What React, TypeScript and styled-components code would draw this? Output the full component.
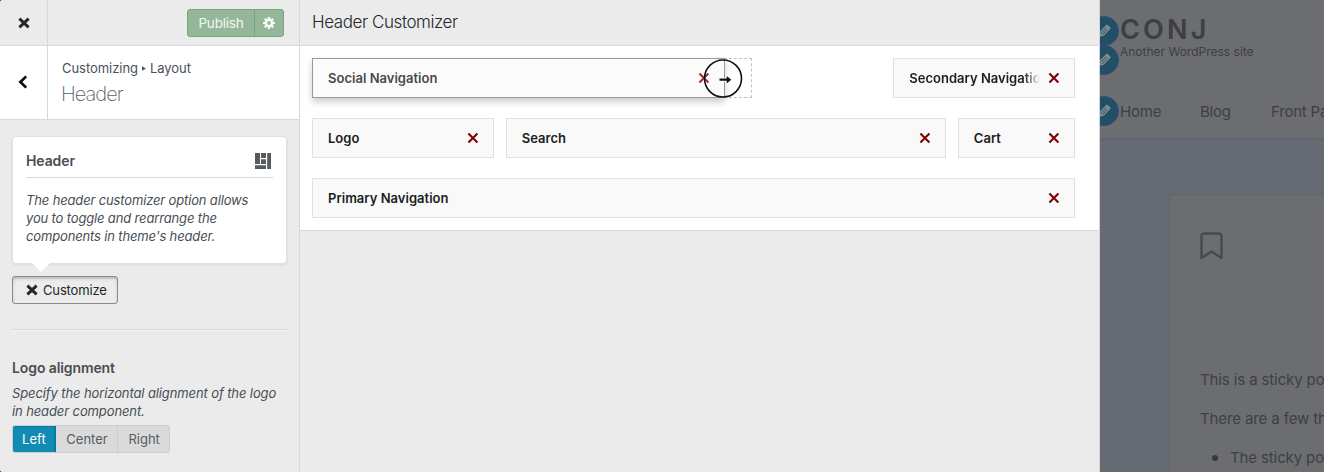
import React from "react";
import styled, { createGlobalStyle, css } from "styled-components";

const GlobalStyle = createGlobalStyle`
  *, *::before, *::after { box-sizing: border-box; }
  html, body { margin: 0; padding: 0; background: #3c3d40; overflow: hidden; }
  body { font-family: Inter, "Liberation Sans", sans-serif; font-size: 13px; color: #23282d; }
  button { font: inherit; margin: 0; padding: 0; cursor: pointer; }
  h1, h2, h3, p, ul { margin: 0; padding: 0; font-weight: inherit; }
  svg { display: block; flex: none; }
`;

const Shell = styled.div`
  display: grid;
  grid-template-columns: 300px 800px 224px;
  width: 1324px;
  height: 472px;
  overflow: hidden;
  border-radius: 3px;
  background: #ebebeb;
`;

/* Sidebar */

const Sidebar = styled.aside`
  display: flex;
  flex-direction: column;
  border-right: 1px solid #d9d9d9;
  background: #ebebeb;
`;

const TopBar = styled.header`
  display: flex;
  height: 46px;
  border-bottom: 1px solid #d9d9d9;
`;

const SquareButton = styled.button`
  display: flex;
  align-items: center;
  justify-content: center;
  width: 48px;
  border: 0;
  border-right: 1px solid #d9d9d9;
  background: transparent;
`;

const PublishGroup = styled.div`
  display: flex;
  height: 28px;
  margin: 9px 15px 0 auto;
  border: 1px solid #77a67e;
  border-radius: 3px;
  background: #95b799;
  overflow: hidden;
`;

const PublishButton = styled.button`
  width: 67px;
  border: 0;
  border-right: 1px solid #77a67e;
  background: transparent;
  color: #f4f8f4;
  font-size: 13.5px;
  letter-spacing: -0.2px;
  line-height: 26px;
`;

const GearButton = styled.button`
  display: flex;
  align-items: center;
  justify-content: center;
  width: 28px;
  border: 0;
  background: transparent;
`;

const SectionHead = styled.div`
  display: flex;
  height: 74px;
  border-bottom: 1px solid #d9d9d9;
  background: #fff;

  ${SquareButton} { padding-bottom: 2px; padding-right: 1px; }
`;

const SectionText = styled.div`
  padding: 12px 0 0 14px;
`;

const Crumbs = styled.div`
  display: flex;
  align-items: center;
  gap: 4px;
  height: 20px;
  color: #4b5157;
  font-size: 13px;
  letter-spacing: -0.05px;
`;

const SectionTitle = styled.h2`
  margin: 2px 0 0 -1px;
  color: #555d66;
  font-size: 20px;
  font-weight: 200;
  letter-spacing: -0.95px;
  line-height: 28px;
`;

const Options = styled.div`
  flex: 1;
  padding: 16px 12px 0;
`;

const InfoCard = styled.section`
  position: relative;
  height: 128px;
  padding: 13px 13px 0;
  border: 1px solid #e0e0e0;
  border-radius: 4px;
  background: #fff;
  box-shadow: 0 1px 3px rgba(0, 0, 0, 0.08);

  &::after {
    content: "";
    position: absolute;
    left: 19px;
    bottom: -9px;
    border: solid transparent;
    border-width: 9px 9px 0;
    border-top-color: #fff;
  }
`;

const CardTitle = styled.div`
  display: flex;
  align-items: center;
  justify-content: space-between;
  height: 28px;
  padding-bottom: 5px;
  border-bottom: 1px solid #d9d9d9;
`;

const Label = styled.h3`
  color: #474e54;
  font-size: 14px;
  font-weight: 600;
  letter-spacing: -0.1px;
  line-height: 18px;
`;

const Description = styled.p<{ $top: number; $tracking: number }>`
  margin-top: ${(p) => p.$top}px;
  color: #474e54;
  font-size: 13px;
  font-style: italic;
  letter-spacing: ${(p) => p.$tracking}px;
  line-height: 18px;
  white-space: nowrap;
`;

const CustomizeButton = styled.button`
  display: flex;
  align-items: center;
  gap: 5px;
  width: 106px;
  height: 28px;
  margin-top: 12px;
  padding-left: 13px;
  border: 1px solid #8b8b8b;
  border-radius: 3px;
  background: #ececec;
  box-shadow: inset 0 2px 4px -2px rgba(0, 0, 0, 0.45);
  color: #23282d;
  font-size: 13px;
  letter-spacing: -0.15px;
`;

const Divider = styled.div`
  height: 2px;
  margin: 25px 0 28px;
  border-top: 1px solid #d6d6d6;
  border-bottom: 1px solid #f6f6f6;
`;

const Segments = styled.div`
  display: flex;
  width: 158px;
  height: 28px;
  margin-top: 5px;
  border: 1px solid #cdcdcd;
  border-radius: 3px;
  background: #dadada;
  overflow: hidden;
`;

const Segment = styled.button<{ $width: number; $active?: boolean }>`
  width: ${(p) => p.$width}px;
  padding-left: 1px;
  border: 0;
  border-right: 1px solid #cdcdcd;
  background: transparent;
  color: #555d66;
  line-height: 26px;

  &:last-child { border-right: 0; }

  ${(p) =>
    p.$active &&
    css`
      margin: -1px 0 -1px -1px;
      border-right-color: #0c7398;
      background: #118bb4;
      color: #fff;
      box-shadow: inset 0 1px 2px rgba(0, 60, 90, 0.5);
    `}
`;

/* Header builder */

const Builder = styled.main`
  display: flex;
  flex-direction: column;
  border-right: 1px solid #d2d3d5;
  background: #ebebeb;
`;

const BuilderTitle = styled.h1`
  height: 46px;
  padding-left: 12px;
  border-bottom: 1px solid #d9d9d9;
  color: #23282d;
  font-size: 17px;
  font-weight: 300;
  letter-spacing: -0.42px;
  line-height: 44px;
`;

const Board = styled.div`
  display: grid;
  grid-template-columns: repeat(12, minmax(0, 1fr));
  grid-auto-rows: 40px;
  gap: 20px 12px;
  height: 185px;
  padding: 12px 24px 12px 12px;
  border-bottom: 1px solid #d9d9d9;
  background: #fff;
`;

const Tile = styled.div<{ $start: number; $span: number }>`
  grid-column: ${(p) => p.$start} / span ${(p) => p.$span};
  display: flex;
  align-items: center;
  gap: 8px;
  padding: 0 14px 0 15px;
  border: 1px solid #e0e0e0;
  background: #f9f9f9;
`;

const TileName = styled.span<{ $fade?: boolean }>`
  flex: 1;
  min-width: 0;
  overflow: hidden;
  color: #191e23;
  font-size: 13px;
  font-weight: 600;
  letter-spacing: 0.02px;
  line-height: 20px;
  white-space: nowrap;
  ${(p) =>
    p.$fade &&
    css`
      mask-image: linear-gradient(to right, #000 calc(100% - 16px), transparent);
    `}
`;

const RemoveButton = styled.button`
  border: 0;
  background: transparent;
`;

const DropZone = styled.div`
  grid-column: 1 / span 7;
  border: 1px dashed #c2c2c2;
`;

const DraggedTile = styled.div`
  position: relative;
  display: flex;
  align-items: center;
  width: 413px;
  height: 40px;
  margin: -1px 0 0 -1px;
  padding: 0 14px 0 15px;
  border: 1px solid #999;
  background: #fbfbfb;
  box-shadow: 0 4px 7px rgba(0, 0, 0, 0.2);

  ${TileName} { color: #474a4d; }
  ${RemoveButton} { opacity: 0.8; }
`;

const Pointer = styled.div`
  position: absolute;
  right: -19px;
  top: 0;
`;

/* Site preview */

const Preview = styled.section`
  display: flex;
  flex-direction: column;
  overflow: hidden;
  background: #666a72;
  color: #3c3f48;
  white-space: nowrap;
`;

const SiteHeader = styled.header`
  position: relative;
  height: 138px;
  padding: 16px 0 0 20px;
  background: #6c6d70;
  box-shadow: 0 1px 4px rgba(0, 0, 0, 0.08);
`;

const SiteName = styled.div`
  font-size: 27px;
  font-weight: 600;
  letter-spacing: 3.2px;
  line-height: 28px;
`;

const Tagline = styled.div`
  margin-top: -1px;
  font-size: 12px;
  line-height: 17px;
`;

const SiteMenu = styled.nav`
  display: flex;
  margin-top: 41px;
  font-size: 15px;
  letter-spacing: -0.2px;
  line-height: 22px;
`;

const MenuItem = styled.span<{ $width: number }>`
  flex: none;
  width: ${(p) => p.$width}px;
`;

const EditPin = styled.span<{ $top: number }>`
  position: absolute;
  left: -11px;
  top: ${(p) => p.$top}px;
  display: flex;
  align-items: center;
  justify-content: center;
  width: 30px;
  height: 30px;
  border: 1px solid #35467a;
  border-radius: 50%;
  background: #215066;
`;

const Article = styled.article`
  flex: 1;
  margin: 58px 0 0 70px;
  padding: 36px 0 0 30px;
  background: #6c6d70;
  box-shadow: 0 0 4px rgba(0, 0, 0, 0.07);
  font-size: 15px;
`;

const Paragraph = styled.p<{ $top: number }>`
  margin-top: ${(p) => p.$top}px;
  letter-spacing: -0.12px;
  line-height: 22px;
`;

const Bullet = styled(Paragraph)`
  display: flex;
  align-items: center;
  gap: 12px;
  padding-left: 12px;

  &::before {
    content: "";
    flex: none;
    width: 6px;
    height: 6px;
    border-radius: 50%;
    background: #363941;
  }
`;

const BoldCross = ({ size = 12 }: { size?: number }) => (
  <svg width={size} height={size} viewBox="0 0 12 12">
    <path d="M1.4 1.6 10.6 10.4M10.6 1.6 1.4 10.4" stroke="#23282d" strokeWidth="2.9" />
  </svg>
);

const Remove = () => (
  <RemoveButton aria-label="Remove">
    <svg width="12" height="12" viewBox="0 0 12 12">
      <path d="M1.4 1.4 10.4 10.4M10.4 1.4 1.4 10.4" stroke="#800006" strokeWidth="2.1" />
    </svg>
  </RemoveButton>
);

const teeth = [0, 45, 90, 135];

const Gear = () => (
  <svg width="12" height="12" viewBox="0 0 12 12">
    <circle cx="6" cy="6" r="3.15" fill="none" stroke="#fafcfa" strokeWidth="2.5" />
    {teeth.map((angle) => (
      <path
        key={angle}
        d="M6 0v2.6M6 9.4V12"
        stroke="#fafcfa"
        strokeWidth="2.2"
        transform={`rotate(${angle} 6 6)`}
      />
    ))}
  </svg>
);

const Pencil = () => (
  <svg width="18" height="18" viewBox="0 0 18 18">
    <g transform="rotate(45 9 9)">
      <path d="M6.3 3.2q0-1.2 1.2-1.2h3.4q1.2 0 1.2 1.2V13L9.2 17 6.3 13z" fill="#7f8b90" />
      <path d="M8.2 5v8M10.3 5v8" stroke="#285466" strokeWidth="0.9" />
    </g>
  </svg>
);

const tiles = [
  { name: "Logo", start: 1, span: 3 },
  { name: "Search", start: 4, span: 7 },
  { name: "Cart", start: 11, span: 2 },
  { name: "Primary Navigation", start: 1, span: 12 },
];

export default function App() {
  return (
    <>
      <GlobalStyle />
      <Shell>
        <Sidebar>
          <TopBar>
            <SquareButton aria-label="Close">
              <BoldCross />
            </SquareButton>
            <PublishGroup>
              <PublishButton>Publish</PublishButton>
              <GearButton aria-label="Settings">
                <Gear />
              </GearButton>
            </PublishGroup>
          </TopBar>
          <SectionHead>
            <SquareButton aria-label="Back">
              <svg width="10" height="14" viewBox="0 0 10 14">
                <path d="M8.2 1.4 2.4 7l5.8 5.6" fill="none" stroke="#0c0d0e" strokeWidth="2.7" />
              </svg>
            </SquareButton>
            <SectionText>
              <Crumbs>
                <span>Customizing</span>
                <svg width="4" height="5" viewBox="0 0 4 5">
                  <path d="M0 0.3 4 2.5 0 4.7z" fill="#4b5157" />
                </svg>
                <span>Layout</span>
              </Crumbs>
              <SectionTitle>Header</SectionTitle>
            </SectionText>
          </SectionHead>
          <Options>
            <InfoCard>
              <CardTitle>
                <Label>Header</Label>
                <svg width="18" height="16" viewBox="0 0 18 16" fill="#555b5e">
                  <path d="M0 0h5v11H0zM6 0h5v5H6zM6 6.200h5V11H6zM0 12.200h11V16H0zM12.200 0H16v16h-3.800z" />
                </svg>
              </CardTitle>
              <Description $top={13} $tracking={-0.15}>
                The header customizer option allows
                <br />
                you to toggle and rearrange the
                <br />
                components in theme's header.
              </Description>
            </InfoCard>
            <CustomizeButton>
              <BoldCross />
              Customize
            </CustomizeButton>
            <Divider />
            <Label>Logo alignment</Label>
            <Description $top={7} $tracking={-0.11}>
              Specify the horizontal alignment of the logo
              <br />
              in header component.
            </Description>
            <Segments>
              <Segment $width={44} $active>Left</Segment>
              <Segment $width={63}>Center</Segment>
              <Segment $width={51}>Right</Segment>
            </Segments>
          </Options>
        </Sidebar>

        <Builder>
          <BuilderTitle>Header Customizer</BuilderTitle>
          <Board>
            <DropZone>
              <DraggedTile>
                <TileName>Social Navigation</TileName>
                <Remove />
                <Pointer>
                  <svg width="40" height="40" viewBox="0 0 40 40" fill="none">
                    <circle cx="20" cy="19.5" r="18.5" stroke="#111" strokeWidth="1.6" />
                    <path
                      d="M16.5 19.6h7.2v-2.6l4.6 3.7-4.6 3.7v-2.6h-7.2z"
                      fill="#111"
                      stroke="#fff"
                      strokeWidth="1.8"
                      paintOrder="stroke"
                    />
                  </svg>
                </Pointer>
              </DraggedTile>
            </DropZone>
            <Tile $start={10} $span={3}>
              <TileName $fade>Secondary Navigation</TileName>
              <Remove />
            </Tile>
            {tiles.map((tile) => (
              <Tile key={tile.name} $start={tile.start} $span={tile.span}>
                <TileName>{tile.name}</TileName>
                <Remove />
              </Tile>
            ))}
          </Board>
        </Builder>

        <Preview>
          <SiteHeader>
            <EditPin $top={16}><Pencil /></EditPin>
            <EditPin $top={45}><Pencil /></EditPin>
            <EditPin $top={96}><Pencil /></EditPin>
            <SiteName>CONJ</SiteName>
            <Tagline>Another WordPress site</Tagline>
            <SiteMenu>
              <MenuItem $width={80}>Home</MenuItem>
              <MenuItem $width={71}>Blog</MenuItem>
              <MenuItem $width={90}>Front Page</MenuItem>
            </SiteMenu>
          </SiteHeader>
          <Article>
            <svg width="23" height="28" viewBox="0 0 23 28">
              <path
                d="M1.5 26V4.2Q1.5 1.5 4.2 1.5H18.8Q21.5 1.5 21.5 4.2V26L11.5 19.5Z"
                fill="none"
                stroke="#484a50"
                strokeWidth="2.4"
                strokeLinejoin="round"
              />
            </svg>
            <Paragraph $top={109}>This is a sticky post.</Paragraph>
            <Paragraph $top={17}>There are a few things</Paragraph>
            <Bullet $top={17}>The sticky post</Bullet>
          </Article>
        </Preview>
      </Shell>
    </>
  );
}
